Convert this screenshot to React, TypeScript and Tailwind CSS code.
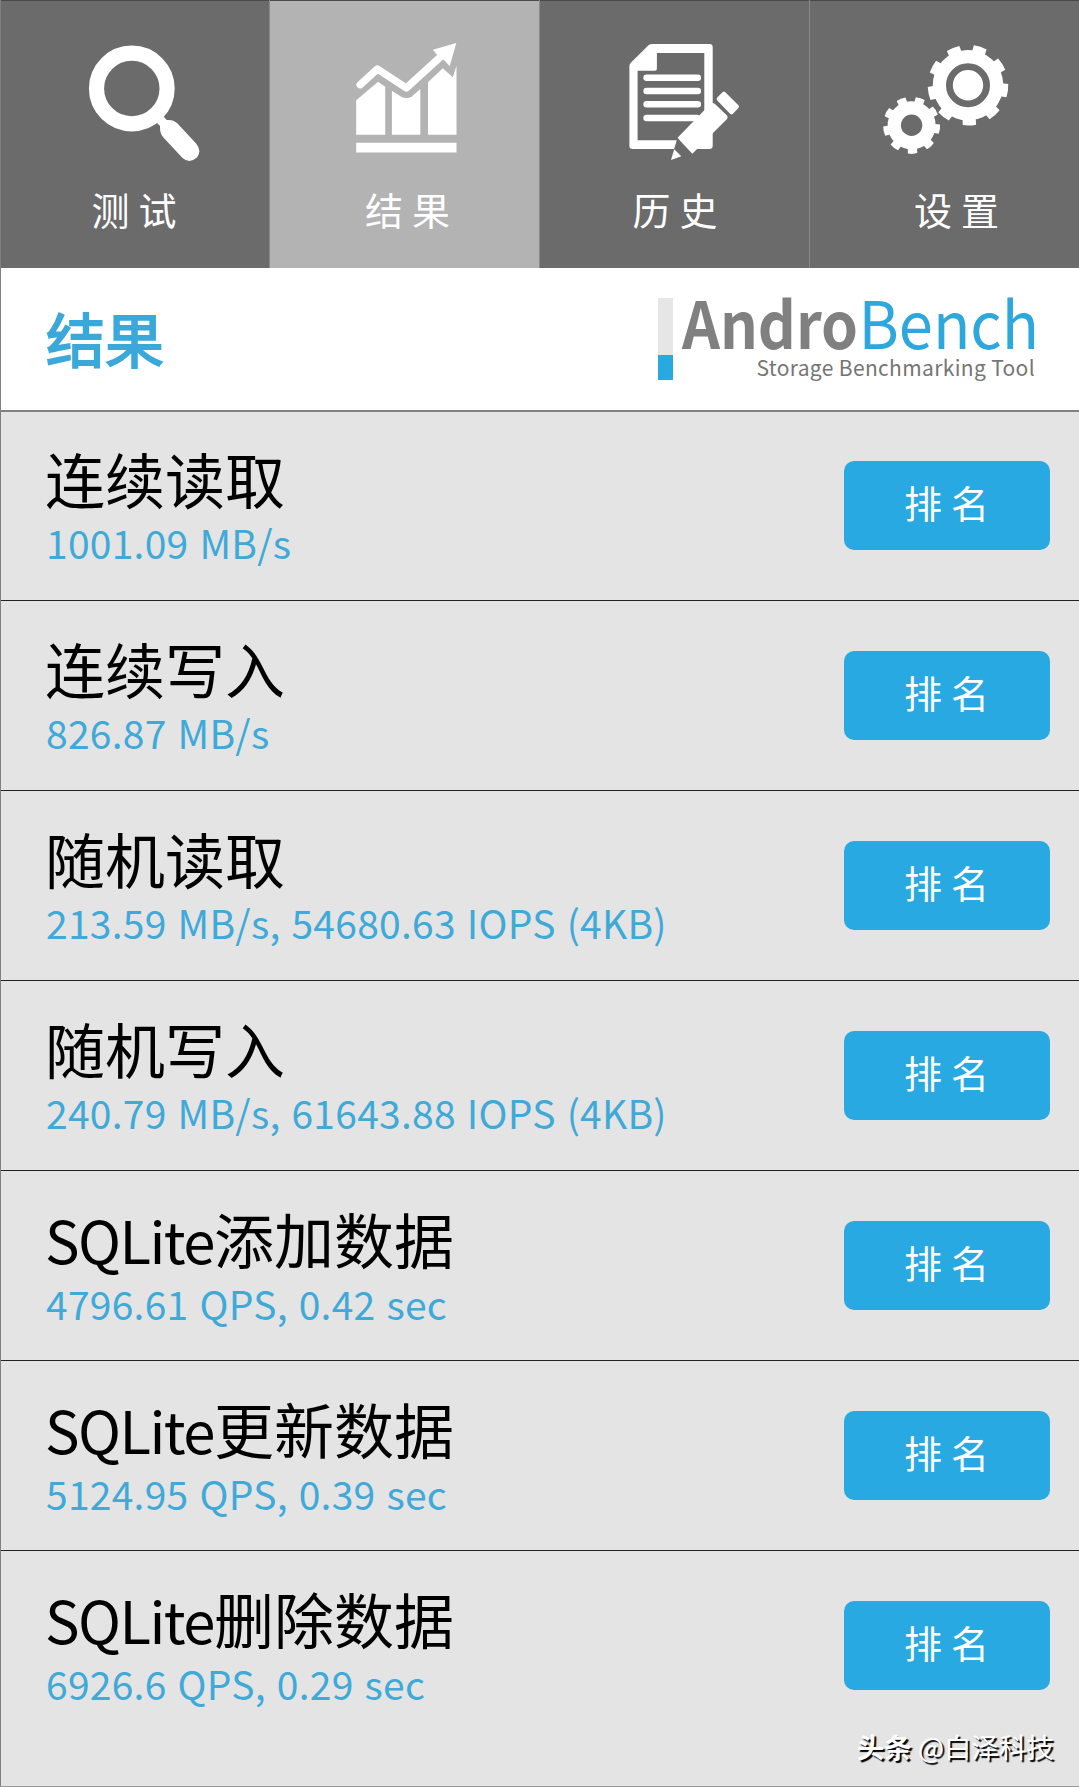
import React from 'react';

type TabProps = {
  label: string;
  active?: boolean;
  labelClass?: string;
  children: React.ReactNode;
};

type Result = {
  prefix?: string;
  title: string;
  value: string;
};

type GearProps = {
  cx: number;
  cy: number;
  body: number;
  outer: number;
  tooth: number;
};

const results: Result[] = [
  { title: '连续读取', value: '1001.09 MB/s' },
  { title: '连续写入', value: '826.87 MB/s' },
  { title: '随机读取', value: '213.59 MB/s, 54680.63 IOPS (4KB)' },
  { title: '随机写入', value: '240.79 MB/s, 61643.88 IOPS (4KB)' },
  { prefix: 'SQLite', title: '添加数据', value: '4796.61 QPS, 0.42 sec' },
  { prefix: 'SQLite', title: '更新数据', value: '5124.95 QPS, 0.39 sec' },
  { prefix: 'SQLite', title: '删除数据', value: '6926.6 QPS, 0.29 sec' },
];

const SearchIcon = () => (
  <>
    <circle cx="131.8" cy="88.5" r="35.3" fill="none" stroke="currentColor" strokeWidth="15.2" />
    <path d="M163.6 116.5L166.7 120Q173 119.3 177.3 123.3L196.3 143.8Q202 151 197 157.6Q189.5 164 182.5 158L163.2 137.3Q159.5 133 160 126L156 122Z" />
  </>
);

const ChartIcon = () => (
  <>
    <path d="M86.2 142.7H186.5V152.6H86.2Z" />
    <path d="M86.2 100.3L108.1 81.7L115.2 86.7V134.7H86.2Z" />
    <path d="M121.9 90.7L131.2 96.7Q136.3 99.5 141.5 96.7L150.3 89V134.7H121.9Z" />
    <path d="M158 82.3L172.8 68.3L182.8 77.3L186.5 65.7V134.7H158Z" />
    <path
      d="M90.2 84.7L107.4 69L136.3 88L172 55.5"
      fill="none"
      stroke="currentColor"
      strokeWidth="7.4"
      strokeLinecap="round"
      strokeLinejoin="round"
    />
    <path d="M186.3 43L162.9 49.7L166.6 54.3L175.2 61.3L179.7 66.3Z" />
  </>
);

const HistoryIcon = () => (
  <>
    <path
      fillRule="evenodd"
      d="M89.4 66Q89.4 64 91 62.5L108.5 45.3Q110 44 112 44H169.5Q172.7 44 172.7 47.2V145.8Q172.7 149 169.5 149H92.6Q89.4 149 89.4 145.8ZM116.9 53V68.7Q116.9 70.7 114.9 70.7H97.6V140.3H140L164.3 118V53Z"
    />
    <path
      d="M106.6 77.7H157.8M106.6 91H157.8M106.6 104.3H157.8M106.6 118H157"
      fill="none"
      stroke="currentColor"
      strokeWidth="6.5"
      strokeLinecap="round"
    />
    <path d="M137.5 137.7L134 149.5L141.3 156.7L153 153.7Z" fill="#6b6b6b" />
    <path d="M137.5 137.7L164.3 110.3L171 103.5Q173 102.3 175.5 104.5L187 115.5Q188.3 117.3 187 119L152.3 153.7Z" />
    <path d="M134.2 149.3L141.3 156.3L131 160Z" />
    <path
      d="M178.7 99L183.9 93.7L197 106.7L191.5 112.3Z"
      stroke="currentColor"
      strokeWidth="4"
      strokeLinejoin="round"
    />
  </>
);

const Gear = ({ cx, cy, body, outer, tooth }: GearProps) => (
  <g transform={`translate(${cx} ${cy}) rotate(-2)`}>
    <circle r={body} />
    {[0, 40, 80, 120, 160, 200, 240, 280, 320].map((angle) => (
      <path
        key={angle}
        transform={`rotate(${angle})`}
        d={`M${-tooth / 2 + 0.7} 10L${-tooth / 2} ${outer - 0.6}Q0 ${outer + 0.6} ${tooth / 2} ${outer - 0.6}L${tooth / 2 - 0.7} 10Z`}
      />
    ))}
  </g>
);

const SettingsIcon = () => (
  <>
    <Gear cx={158} cy={85.2} body={35.3} outer={40.3} tooth={13.4} />
    <circle cx="158" cy="85.2" r="18.6" fill="none" stroke="#6b6b6b" strokeWidth="6.8" />
    <Gear cx={101.6} cy={125.3} body={24} outer={28.6} tooth={9.4} />
    <circle cx="101.6" cy="125.3" r="10.7" fill="#6b6b6b" />
  </>
);

const Tab = ({ label, active, labelClass = 'pl-[8px]', children }: TabProps) => (
  <button
    className={`flex flex-col text-white border-t border-[#4a4a4a] ${
      active ? 'bg-[#b3b3b3]' : 'bg-[#6b6b6b]'
    }`}
  >
    <svg viewBox="0 1 269 182" className="h-[182px] w-[269px] fill-current">
      {children}
    </svg>
    <span className={`w-full text-center text-[38px] leading-[52px] tracking-[9px] ${labelClass}`}>
      {label}
    </span>
  </button>
);

const Logo = () => (
  <div className="flex gap-[9px] pt-[30px]">
    <div className="flex h-[82px] w-[15px] flex-col bg-[#e6e6e6]">
      <div className="mt-auto h-[25px] bg-[#28a9e1]" />
    </div>
    <div className="w-[353px] whitespace-nowrap">
      <div className="flex justify-between text-[65px] leading-[46px]">
        <div className="w-[178px]">
          <span className="inline-block origin-left scale-x-[0.91] font-bold text-[#808080]">Andro</span>
        </div>
        <div className="flex w-[175px] justify-end">
          <span className="-mr-[4px] inline-block origin-right scale-x-[0.945] text-[#2ea8dc]">Bench</span>
        </div>
      </div>
      <div className="mt-[9px] text-right text-[21px] leading-[28px] tracking-[0.35px] text-[#757575]">
        Storage Benchmarking Tool
      </div>
    </div>
  </div>
);

const ResultRow = ({ prefix, title, value }: Result) => (
  <li className="flex h-[190px] justify-between border-b border-[#222] pl-[45px] pr-[29px] last:border-b-0">
    <div className="whitespace-nowrap pt-[37px]">
      <h2 className="text-[60px] leading-[60px] text-black">
        {prefix && <span className="text-[58px] tracking-[-1.55px]">{prefix}</span>}
        {title}
      </h2>
      <p className="mt-[10px] pl-px text-[39px] leading-[48px] tracking-[0.25px] [word-spacing:2px] text-[#3fa9d8]">{value}</p>
    </div>
    <button className="mt-[50px] h-[89px] w-[206px] rounded-[10px] bg-[#28a9e1] pb-[8px] pl-[8px] text-[38px] tracking-[9px] text-white">
      排名
    </button>
  </li>
);

export default function App() {
  return (
    <div className="relative flex h-[1787px] w-[1079px] flex-col overflow-hidden border-b border-[#999] bg-[#e4e4e4] font-['Noto_Sans_CJK_SC',sans-serif]">
      <nav className="grid h-[268px] grid-cols-4 gap-px bg-[#8a8a8a]">
        <Tab label="测试">
          <SearchIcon />
        </Tab>
        <Tab label="结果" active labelClass="pl-[15px]">
          <ChartIcon />
        </Tab>
        <Tab label="历史" labelClass="pl-[10px]">
          <HistoryIcon />
        </Tab>
        <Tab label="设置" labelClass="pl-[33px]">
          <SettingsIcon />
        </Tab>
      </nav>
      <header className="relative flex h-[144px] justify-between border-b-2 border-[#808080] bg-white pl-[46px] pr-[44px]">
        <h1 className="pt-[35px] text-[59px] leading-[70px] text-[#3ba8da] [-webkit-text-stroke:1.8px_#3ba8da]">结果</h1>
        <Logo />
      </header>
      <ul className="-mt-px">
        {results.map((result) => (
          <ResultRow key={result.value} {...result} />
        ))}
      </ul>
      {/* hairline down the left edge of the screen */}
      <div className="absolute inset-y-0 left-0 w-px bg-[#808080]" />
      <div className="absolute bottom-[22px] right-[25px] whitespace-nowrap text-[27.5px] leading-[36px] text-white [text-shadow:2px_2px_1px_#000]">
        <span className="font-bold">头条</span> @白泽科技
      </div>
    </div>
  );
}
